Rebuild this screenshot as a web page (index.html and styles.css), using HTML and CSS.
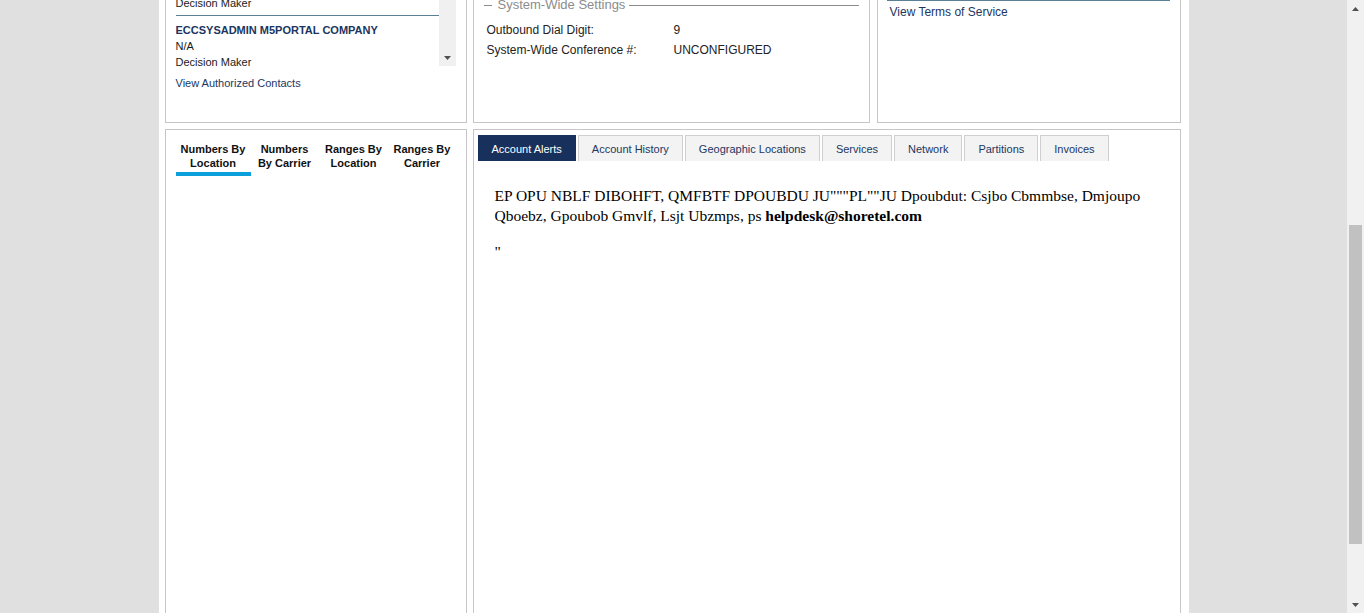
FILE: index.html
```html
<!DOCTYPE html>
<html>
<head>
<meta charset="utf-8">
<title>Account</title>
<link rel="stylesheet" href="styles.css">
</head>
<body>
<div class="viewport">
  <div class="page">
    <section class="panel panel-top contacts">
      <div class="list-box">
        <div class="list-items">
          <div class="contact">
            <div>Decision Maker</div>
          </div>
          <div class="contact">
            <div class="contact-name">ECCSYSADMIN M5PORTAL COMPANY</div>
            <div>N/A</div>
            <div>Decision Maker</div>
          </div>
        </div>
        <div class="list-scroll">
          <span class="list-track"></span>
          <span class="arrow-btn"><svg width="7" height="4" viewBox="0 0 7 4"><polygon points="0,0 7,0 3.5,4" fill="#505050"/></svg></span>
        </div>
      </div>
      <a class="link contacts-link" href="#">View Authorized Contacts</a>
    </section>

    <section class="panel panel-top settings">
      <div class="legend"><span>System-Wide Settings</span></div>
      <div class="setting-row first"><span class="setting-label">Outbound Dial Digit:</span><span>9</span></div>
      <div class="setting-row"><span class="setting-label">System-Wide Conference #:</span><span>UNCONFIGURED</span></div>
    </section>

    <section class="panel panel-top terms">
      <div class="rule"></div>
      <a class="link terms-link" href="#">View Terms of Service</a>
    </section>

    <section class="panel panel-bottom numbers">
      <div class="num-tabs">
        <div class="num-tab active w1">Numbers By<br>Location</div>
        <div class="num-tab w2">Numbers<br>By Carrier</div>
        <div class="num-tab w3">Ranges By<br>Location</div>
        <div class="num-tab w4">Ranges By<br>Carrier</div>
      </div>
    </section>

    <section class="panel panel-bottom alerts">
      <nav class="tabs">
        <a class="tab active" href="#">Account Alerts</a>
        <a class="tab" href="#">Account History</a>
        <a class="tab" href="#">Geographic Locations</a>
        <a class="tab" href="#">Services</a>
        <a class="tab" href="#">Network</a>
        <a class="tab" href="#">Partitions</a>
        <a class="tab" href="#">Invoices</a>
      </nav>
      <div class="alert-content">
        <p>EP OPU NBLF DIBOHFT, QMFBTF DPOUBDU JU"""PL""JU Dpoubdut: Csjbo Cbmmbse, Dmjoupo Qboebz, Gpoubob Gmvlf, Lsjt Ubzmps, ps <b>helpdesk@shoretel.com</b></p>
        <p>"</p>
      </div>
    </section>
  </div>
</div>
<div class="scrollbar">
  <span class="sb-btn"><svg width="7" height="4" viewBox="0 0 7 4"><polygon points="3.5,0 7,4 0,4" fill="#505050"/></svg></span>
  <span class="sb-track"><span class="sb-thumb"></span></span>
  <span class="sb-btn"><svg width="7" height="4" viewBox="0 0 7 4"><polygon points="0,0 7,0 3.5,4" fill="#505050"/></svg></span>
</div>
</body>
</html>
```

FILE: styles.css
```css
* { box-sizing: border-box; }
html, body { margin: 0; padding: 0; }
body {
  display: flex;
  height: 613px;
  overflow: hidden;
  background: #e0e0e0;
  font-family: "Liberation Sans", Arial, sans-serif;
  font-size: 11px;
  color: #1a1a1a;
}
.viewport {
  flex: 1;
  height: 613px;
  overflow: hidden;
}
.page {
  width: 1030px;
  margin: 0 auto;
  height: 613px;
  background: #fff;
  padding: 0 8px 0 6px;
  display: grid;
  grid-template-columns: 302px 398px 1fr;
  grid-template-rows: 123px 520px;
  column-gap: 6px;
  row-gap: 6px;
}
.panel {
  border: 1px solid #c6c6c6;
  background: #fff;
  overflow: hidden;
}
.panel-top { border-top: none; }
.link { color: #1d3661; text-decoration: none; display: block; }

/* contacts */
.contacts { padding: 0 10px; }
.list-box {
  height: 66px;
  display: flex;
  overflow: hidden;
}
.list-items { flex: 1; margin-top: -11px; }
.contact {
  padding: 6px 0 4px;
  line-height: 16px;
  border-bottom: 1px solid #5b7f95;
}
.contact:last-child { border-bottom: none; }
.contact-name { font-weight: bold; color: #1b3560; }
.list-scroll {
  width: 17px;
  background: #f0f0f0;
  display: flex;
  flex-direction: column;
}
.list-track { flex: 1; }
.arrow-btn {
  height: 17px;
  display: flex;
  align-items: center;
  justify-content: center;
}
.contacts-link { margin-top: 9px; line-height: 16px; }

/* settings */
.settings { padding: 0 10px; margin-right: 1px; }
.legend {
  margin-top: -2px;
  height: 14px;
  display: flex;
  align-items: center;
  font-size: 13px;
  line-height: 14px;
  color: #8c8c8c;
}
.legend::before {
  content: "";
  width: 8px;
  border-top: 1px solid #8c8c8c;
  margin-right: 6px;
}
.legend::after {
  content: "";
  flex: 1;
  border-top: 1px solid #8c8c8c;
  margin-left: 4px;
}
.setting-row {
  display: flex;
  padding-left: 3px;
  font-size: 12px;
  line-height: 20px;
  color: #222;
}
.setting-row.first { margin-top: 8px; }
.setting-label { width: 187px; }

/* terms */
.terms { padding: 0 10px 0 9px; }
.rule { height: 1px; background: #5b7f95; }
.terms-link { font-size: 12px; line-height: 16px; margin-top: 3px; padding-left: 3px; }

/* numbers */
.numbers { padding: 12px 9px 0 10px; }
.num-tabs { display: flex; }
.num-tab {
  text-align: center;
  font-weight: bold;
  font-size: 11px;
  line-height: 14px;
  color: #111;
  padding-bottom: 2px;
  border-bottom: 4px solid transparent;
}
.num-tab.active { border-bottom-color: #0b9fdb; }
.w1 { width: 75px; }
.w2 { width: 68px; }
.w3 { width: 70px; }
.w4 { width: 67px; }

/* alerts */
.alerts {
  grid-column: 2 / 4;
  padding: 5px 4px;
}
.tabs { display: flex; gap: 2px; }
.tab {
  height: 26px;
  padding: 0 13px;
  border: 1px solid #cfcfcf;
  border-bottom: none;
  background: #f3f3f3;
  color: #1d3661;
  font-size: 11px;
  line-height: 26px;
  text-decoration: none;
  white-space: nowrap;
}
.tab.active {
  background: #17315c;
  border-color: #17315c;
  color: #fff;
}
.alert-content {
  padding: 25px 17px 0;
  font-family: "Liberation Serif", "Times New Roman", serif;
  font-size: 15.5px;
  line-height: 20px;
  color: #000;
}
.alert-content p { margin: 0 0 16px; }

/* page scrollbar */
.scrollbar {
  width: 17px;
  height: 613px;
  background: #f1f1f1;
  display: flex;
  flex-direction: column;
}
.sb-btn {
  height: 17px;
  display: flex;
  align-items: center;
  justify-content: center;
}
.sb-track { flex: 1; }
.sb-thumb {
  display: block;
  margin: 208px 2px 0;
  height: 319px;
  background: #c1c1c1;
}
```
